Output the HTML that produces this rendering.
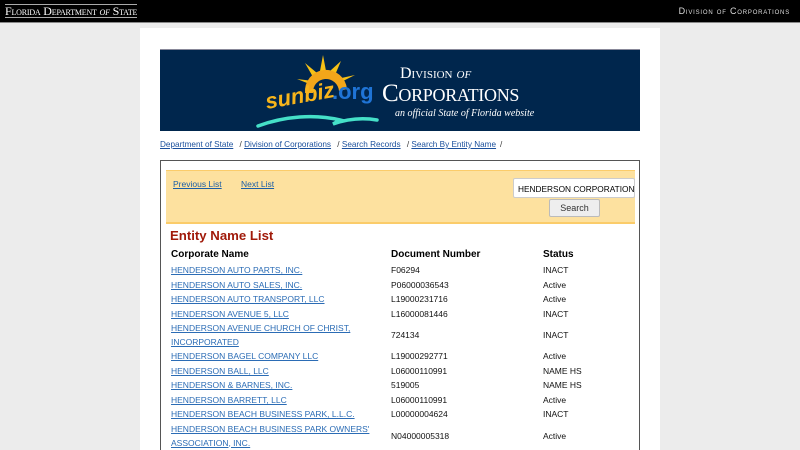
<!DOCTYPE html>
<html style="overflow:hidden;height:450px"><head><meta charset="utf-8">
<style>
body{margin:0;width:800px;height:450px;overflow:hidden;background:#ececec;font-family:"Liberation Sans",sans-serif;position:relative}
.top{height:22px;background:#000;border-bottom:1px solid #888;position:relative;color:#fff}
.top .l{position:absolute;left:5px;top:4px;font-family:"Liberation Serif",serif;font-size:12px;border-top:1px solid #aaa;border-bottom:1px solid #aaa;line-height:12px;font-variant:small-caps;letter-spacing:-.2px}
.top .r{position:absolute;right:10px;top:6px;font-size:9px;letter-spacing:.8px;font-variant:small-caps;color:#ddd}
.page{position:absolute;left:140px;top:28px;width:520px;height:422px;background:#fff;overflow:hidden}
.banner{position:absolute;left:20px;top:21px;width:480px;height:81px;background:#00264d;border-top:1px solid #889}
.crumb{position:absolute;left:20px;font-size:8.2px;color:#333}
.crumb a{color:#1a4f9c;text-decoration:underline;margin-right:4px}
.box{position:absolute;left:20px;top:132px;width:478px;height:289px;border:1px solid #555;border-bottom:none}
.yel{position:absolute;left:5px;top:9px;width:469px;height:51px;background:#fde19f;border-bottom:2px solid #fbcc6a;border-top:1px solid #fbcc6a}
a{color:#1a5ea8;text-decoration:underline}
.yel a{position:absolute;top:8px;font-size:8.5px}
.inp{position:absolute;left:347px;top:7px;width:122px;height:20px;background:#fff;border:1px solid #ccc;border-radius:2px;font-size:8.3px;line-height:20px;padding-left:4px;box-sizing:border-box;white-space:nowrap;overflow:hidden}
.btn{position:absolute;left:383px;top:28px;width:49px;height:16px;background:#eee;border:1px solid #bbb;border-radius:2px;font-size:9px;text-align:center;line-height:16px;color:#333}
h1{position:absolute;left:9px;top:67px;margin:0;font-size:13.2px;color:#a01a0a}
table{position:absolute;left:10px;top:84px;border-collapse:collapse;font-size:8.5px}
td{padding:0;height:14.5px;vertical-align:middle;color:#111}
th{text-align:left;font-size:10px;height:18px;padding:0}
td a{font-size:8.5px;color:#2b6cb5}
</style></head><body>
<div class="top"><div class="l">Florida Department <i>of</i> State</div><div class="r">Division of Corporations</div></div>
<div class="page">
<div class="banner">
 <svg style="position:absolute;left:135px;top:3px" width="65" height="45" viewBox="0 0 65 45">
  <g fill="#f6c116">
   <polygon points="28,2 31,18 25,18"/><polygon points="10,10 22,20 18,24"/><polygon points="46,8 40,22 35,18"/>
   <polygon points="2,26 18,28 17,32"/><polygon points="60,22 44,30 42,26"/>
  </g>
  <path d="M10 40 A20 20 0 0 1 52 36 L44 38 A13 13 0 0 0 18 40 Z" fill="#f3a61a"/>
 </svg>
 <div style="position:absolute;left:105px;top:33px;font:italic bold 22px 'Liberation Sans',sans-serif;color:#f6b41b;transform:rotate(-10deg)">sunbiz</div>
 <div style="position:absolute;left:172px;top:29px;font:bold 22px 'Liberation Sans',sans-serif;color:#1f74d6">.org</div>
 <svg style="position:absolute;left:95px;top:60px" width="125" height="20"><path d="M3 16 C30 6 60 4 85 10 L78 14 C95 8 110 8 122 10" stroke="#45e0c8" stroke-width="3.5" fill="none" stroke-linecap="round"/></svg>
 <div style="position:absolute;left:240px;top:15px;color:#fff;font:16px 'Liberation Serif',serif;font-variant:small-caps">Division <i>of</i></div>
 <div style="position:absolute;left:222px;top:30px;color:#fff;font:25px 'Liberation Serif',serif;font-variant:small-caps;letter-spacing:-.3px">Corporations</div>
 <div style="position:absolute;left:235px;top:58px;color:#fff;font:italic 10px 'Liberation Serif',serif">an official State of Florida website</div>
</div>
<div class="crumb" style="top:112px"><a>Department of State</a> / <a>Division of Corporations</a> / <a>Search Records</a> / <a>Search By Entity Name</a>/</div>
<div class="box">
 <div class="yel"><a style="left:7px">Previous List</a><a style="left:75px">Next List</a>
 <div class="inp">HENDERSON CORPORATION</div><div class="btn">Search</div></div>
 <h1>Entity Name List</h1>
 <table>
 <tr><th style="width:220px">Corporate Name</th><th style="width:152px">Document Number</th><th>Status</th></tr>
 <tr><td><a>HENDERSON AUTO PARTS, INC.</a></td><td>F06294</td><td>INACT</td></tr>
 <tr><td><a>HENDERSON AUTO SALES, INC.</a></td><td>P06000036543</td><td>Active</td></tr>
 <tr><td><a>HENDERSON AUTO TRANSPORT, LLC</a></td><td>L19000231716</td><td>Active</td></tr>
 <tr><td><a>HENDERSON AVENUE 5, LLC</a></td><td>L16000081446</td><td>INACT</td></tr>
 <tr><td style="height:27px;line-height:14px"><a>HENDERSON AVENUE CHURCH OF CHRIST,<br>INCORPORATED</a></td><td>724134</td><td>INACT</td></tr>
 <tr><td><a>HENDERSON BAGEL COMPANY LLC</a></td><td>L19000292771</td><td>Active</td></tr>
 <tr><td><a>HENDERSON BALL, LLC</a></td><td>L06000110991</td><td>NAME HS</td></tr>
 <tr><td><a>HENDERSON &amp; BARNES, INC.</a></td><td>519005</td><td>NAME HS</td></tr>
 <tr><td><a>HENDERSON BARRETT, LLC</a></td><td>L06000110991</td><td>Active</td></tr>
 <tr><td><a>HENDERSON BEACH BUSINESS PARK, L.L.C.</a></td><td>L00000004624</td><td>INACT</td></tr>
 <tr><td style="height:27px;line-height:14px"><a>HENDERSON BEACH BUSINESS PARK OWNERS'<br>ASSOCIATION, INC.</a></td><td>N04000005318</td><td>Active</td></tr>
 </table>
</div>
</div>
</body></html>
